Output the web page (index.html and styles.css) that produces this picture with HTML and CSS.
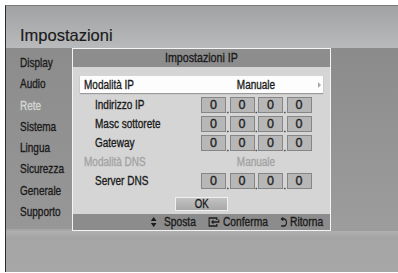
FILE: index.html
```html
<!DOCTYPE html>
<html>
<head>
<meta charset="utf-8">
<link rel="stylesheet" href="styles.css">
</head>
<body>
<div class="frame">
  <div class="top"><h1 class="title">Impostazioni</h1></div>
  <div class="main">
    <ul class="menu">
      <li>Display</li>
      <li>Audio</li>
      <li class="active">Rete</li>
      <li>Sistema</li>
      <li>Lingua</li>
      <li>Sicurezza</li>
      <li>Generale</li>
      <li>Supporto</li>
    </ul>
    <div class="dialog">
      <div class="dlg-head"><span class="cc">Impostazioni IP</span></div>
      <div class="dlg-body">
        <div class="sel-row">
          <span class="sel-label"><span class="cx">Modalità IP</span></span>
          <span class="sel-value"><span class="cc">Manuale</span></span>
          <span class="sel-arrow"></span>
        </div>
        <div class="row">
          <span class="label"><span class="cx">Indirizzo IP</span></span>
          <div class="ip"><span class="box">0</span><span class="dot">.</span><span class="box">0</span><span class="dot">.</span><span class="box">0</span><span class="dot">.</span><span class="box">0</span></div>
        </div>
        <div class="row">
          <span class="label"><span class="cx">Masc sottorete</span></span>
          <div class="ip"><span class="box">0</span><span class="dot">.</span><span class="box">0</span><span class="dot">.</span><span class="box">0</span><span class="dot">.</span><span class="box">0</span></div>
        </div>
        <div class="row">
          <span class="label"><span class="cx">Gateway</span></span>
          <div class="ip"><span class="box">0</span><span class="dot">.</span><span class="box">0</span><span class="dot">.</span><span class="box">0</span><span class="dot">.</span><span class="box">0</span></div>
        </div>
        <div class="row disabled">
          <span class="label outdent"><span class="cx">Modalità DNS</span></span>
          <span class="value"><span class="cc">Manuale</span></span>
        </div>
        <div class="row">
          <span class="label"><span class="cx">Server DNS</span></span>
          <div class="ip"><span class="box">0</span><span class="dot">.</span><span class="box">0</span><span class="dot">.</span><span class="box">0</span><span class="dot">.</span><span class="box">0</span></div>
        </div>
        <div class="ok-wrap"><span class="ok"><span class="cc">OK</span></span></div>
      </div>
      <div class="dlg-foot">
        <div class="foot-in">
          <span class="hint s1"><svg width="7" height="10" viewBox="0 0 7 10"><path d="M3.5 0 L7 4 L0 4 Z M0 6 L7 6 L3.5 10 Z" fill="#1c1c1c"/></svg>Sposta</span>
          <span class="hint"><svg width="14" height="10" viewBox="0 0 14 10"><path d="M10.5 3 V1 H1 V9 H10.5 V7" fill="none" stroke="#1c1c1c" stroke-width="1.5"/><path d="M13 2.5 V5 H6" fill="none" stroke="#1c1c1c" stroke-width="1.5"/><path d="M3.5 5 L6.5 2.5 L6.5 7.5 Z" fill="#1c1c1c"/></svg>Conferma</span>
          <span class="hint"><svg width="8" height="10" viewBox="0 0 8 10"><path d="M3 2 H4.2 A3.3 3.4 0 0 1 4.2 8.9 H1" fill="none" stroke="#1c1c1c" stroke-width="1.5"/><path d="M0 2 L3.5 -0.2 L3.5 4.2 Z" fill="#1c1c1c"/></svg>Ritorna</span>
        </div>
      </div>
    </div>
    <div class="side"></div>
  </div>
  <div class="bottom"></div>
</div>
</body>
</html>
```
FILE: styles.css
```css
html, body {
  margin: 0;
  padding: 0;
  background: #fff;
}
body {
  font-family: "Liberation Sans", Arial, sans-serif;
  color: #1b1b1b;
  width: 398px;
  height: 273px;
  overflow: hidden;
  -webkit-text-stroke: 0.35px currentColor;
}
.frame {
  margin: 5px 0 0 5px;
  width: 393px;
  height: 266px;
  border-left: 1px solid #2a2a2a;
  border-top: 1px solid #7a7a7a;
  display: flex;
  flex-direction: column;
  background: #a6a6a6;
}
.top {
  height: 42px;
  background: linear-gradient(#a1a2a4, #b9babc);
  display: flex;
  align-items: flex-end;
}
.title {
  margin: 0 0 3px 14px;
  font-size: 16.5px;
  font-weight: normal;
  line-height: 19px;
  color: #1a1a1a;
  -webkit-text-stroke: 0.15px currentColor;
}
.main {
  display: flex;
  height: 183px;
}
.menu {
  list-style: none;
  margin: 0;
  padding: 4px 0 0 14px;
  width: 52px;
  height: 177px;
  background: linear-gradient(#8c8c8c, #979797);
  font-size: 13px;
}
.menu li {
  line-height: 21.3px;
  height: 21.3px;
  color: #1b1b1b;
  white-space: nowrap;
  transform: scaleX(0.77);
  transform-origin: 0 50%;
}
.menu li.active {
  color: #d6d6d6;
}
.cx, .cc {
  display: inline-block;
  white-space: nowrap;
  transform: scaleX(0.8);
}
.cx {
  transform-origin: 0 50%;
}
.cc {
  transform-origin: 50% 50%;
}
.dialog {
  width: 257px;
  border: 1px solid #f4f4f4;
  background: #d5d5d5;
  display: flex;
  flex-direction: column;
}
.dlg-head {
  height: 18px;
  line-height: 18px;
  background: #8d8d8d;
  text-align: center;
  font-size: 13px;
}
.dlg-head .cc {
  transform: scaleX(0.82);
}
.dlg-body {
  flex: 1;
  padding: 9px 7px 0 7px;
  display: flex;
  flex-direction: column;
}
.sel-row {
  height: 17px;
  background: #fdfdfd;
  box-shadow: 0 1px 1px #9a9a9a;
  display: flex;
  align-items: center;
  font-size: 12.5px;
}
.sel-label {
  width: 117px;
  padding-left: 4px;
}
.sel-value {
  width: 110px;
  text-align: center;
}
.sel-arrow {
  margin-left: 7px;
  width: 0;
  height: 0;
  border-left: 3px solid #aaa;
  border-top: 3px solid transparent;
  border-bottom: 3px solid transparent;
}
.row {
  display: flex;
  align-items: center;
  height: 16px;
  margin-top: 3px;
  font-size: 12.5px;
}
.sel-row + .row {
  margin-top: 4px;
}
.label {
  width: 106px;
  padding-left: 15px;
}
.label.outdent {
  padding-left: 4px;
  width: 117px;
}
.disabled {
  color: #a3a3a3;
}
.value {
  width: 110px;
  text-align: center;
}
.ip {
  display: flex;
  align-items: flex-end;
  height: 16px;
}
.box {
  width: 23px;
  height: 14px;
  border: 1px solid #868686;
  background: #b7b7b7;
  text-align: center;
  line-height: 14px;
  font-size: 12.5px;
  color: #222;
}
.dot {
  width: 3.5px;
  font-size: 9px;
  line-height: 6px;
  text-align: center;
  color: #333;
}
.ok-wrap {
  display: flex;
  justify-content: center;
  margin-top: 8px;
}
.ok {
  width: 51px;
  height: 12px;
  border: 1px solid #f0f0f0;
  background: linear-gradient(#c2c2c2, #a9a9a9);
  text-align: center;
  font-size: 12px;
  line-height: 12px;
}
.dlg-foot {
  height: 16px;
  margin-top: 3px;
  background: #8c8c8c;
  display: flex;
  justify-content: flex-end;
  align-items: center;
  padding-right: 7px;
  font-size: 12.5px;
}
.foot-in {
  display: flex;
  align-items: center;
  gap: 15px;
  white-space: nowrap;
  transform: scaleX(0.82);
  transform-origin: 100% 50%;
}
.hint {
  display: flex;
  align-items: center;
  gap: 4px;
}
.hint.s1 {
  gap: 9px;
}
.side {
  flex: 1;
  background: linear-gradient(#8b8b8b, #9d9d9d);
}
.bottom {
  flex: 1;
  background: linear-gradient(#b0b0b0, #a5a5a5 6px, #a7a7a7);
}
```
